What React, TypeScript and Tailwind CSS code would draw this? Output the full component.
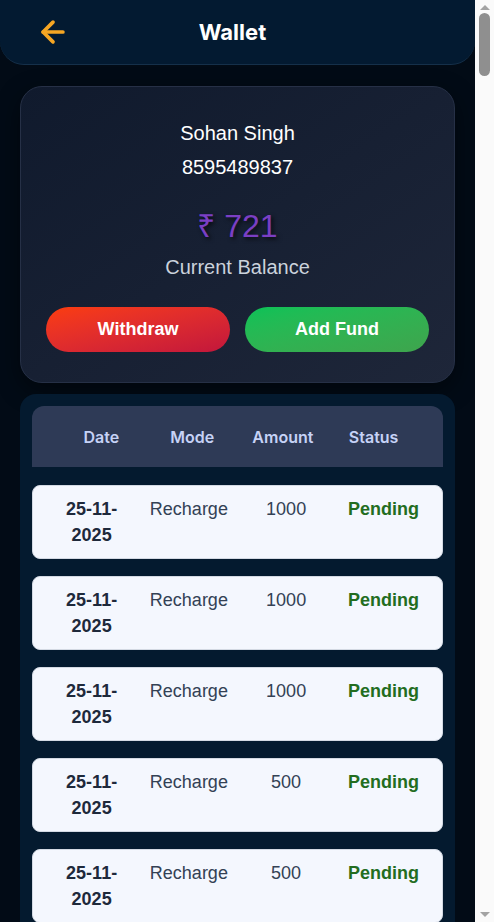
import { ArrowLeft } from "lucide-react";

type Txn = { date: [string, string]; mode: string; amount: number; status: string };

const TXNS: Txn[] = [1000, 1000, 1000, 500, 500, 200, 1000].map((amount) => ({
  date: ["25-11-", "2025"],
  mode: "Recharge",
  amount,
  status: "Pending",
}));

const sans = "font-['Liberation_Sans',Arial,sans-serif]";
const inter = "font-['Inter','Liberation_Sans',sans-serif]";

function Header() {
  return (
    <header className="flex h-[65px] items-center rounded-b-[24px] border-b border-[#15304a] bg-[#031a31] pl-[36px]">
      <ArrowLeft className="h-[34px] w-[34px] shrink-0 text-[#f6a623]" strokeWidth={2.6} />
      <h1 className={`flex-1 text-center text-[22px] font-bold text-white ${inter}`}>Wallet</h1>
      <div className="w-[80px] shrink-0" />
    </header>
  );
}

function BalanceCard() {
  return (
    <section className="rounded-[22px] border border-[#263046] bg-gradient-to-br from-[#101a2d] to-[#1e2639] px-[25px] pb-[30px] pt-[29px] text-center shadow-[0_8px_24px_rgba(0,0,0,0.45)]">
      <p className="text-[20px] leading-[34px] text-white">Sohan Singh</p>
      <p className="text-[20px] leading-[34px] text-white">8595489837</p>
      <p className="mt-[18px] text-[32px] leading-[48px] text-[#7b3fc4] [text-shadow:2px_2px_4px_rgba(0,0,0,0.7)]">
        ₹ 721
      </p>
      <p className="mt-1 text-[20px] leading-[26px] text-[#cbd2dc]">Current Balance</p>
      <div className="mt-[27px] flex gap-[15px]">
        <button className="h-[45px] flex-1 rounded-full bg-gradient-to-br from-[#fb3d0b] to-[#c2163b] text-[18px] font-bold text-white">
          Withdraw
        </button>
        <button className="h-[45px] flex-1 rounded-full bg-gradient-to-br from-[#07c257] to-[#3ea44d] text-[18px] font-bold text-white">
          Add Fund
        </button>
      </div>
    </section>
  );
}

function History() {
  return (
    <section className="mt-[11px] rounded-[16px] bg-[#041a2f] p-3">
      <div
        className={`grid h-[61px] grid-cols-4 items-center rounded-t-[12px] bg-[#2e3a56] px-6 text-center text-[16px] font-semibold text-[#c6d2f6] ${inter}`}
      >
        <span>Date</span>
        <span>Mode</span>
        <span>Amount</span>
        <span>Status</span>
      </div>
      <ul className="mt-[18px] flex flex-col gap-[17px]">
        {TXNS.map((t, i) => (
          <li
            key={i}
            className="grid grid-cols-4 items-start rounded-[8px] border border-[#d3d9e3] bg-[#f4f7fe] px-[10px] py-[10px] text-center text-[18px] leading-[26px] text-[#334155]"
          >
            <span className="px-2 font-bold text-[#1e293b]">
              {t.date[0]}
              <wbr />
              {t.date[1]}
            </span>
            <span>{t.mode}</span>
            <span>{t.amount}</span>
            <span className="font-bold text-[#236d1f]">{t.status}</span>
          </li>
        ))}
      </ul>
    </section>
  );
}

/** The page's own scrollbar, as it shows in the capture. */
function Scrollbar() {
  return (
    <div className="flex w-[19px] shrink-0 flex-col items-center bg-[#fafafa] py-[5px]">
      <span className="h-0 w-0 border-x-[5px] border-b-[5px] border-x-transparent border-b-[#a3a3a3]" />
      <span className="mt-[3px] h-[63px] w-[11px] rounded-full bg-[#8f8f8f]" />
      <span className="flex-1" />
      <span className="h-0 w-0 border-x-[5px] border-t-[5px] border-x-transparent border-t-[#a3a3a3]" />
    </div>
  );
}

export default function App() {
  return (
    <div className={`flex h-screen overflow-hidden ${sans}`}>
      <div className="min-w-0 flex-1 overflow-hidden bg-[#020b16]">
        <Header />
        <main className="px-5 pb-6 pt-[21px]">
          <BalanceCard />
          <History />
        </main>
      </div>
      <Scrollbar />
    </div>
  );
}
